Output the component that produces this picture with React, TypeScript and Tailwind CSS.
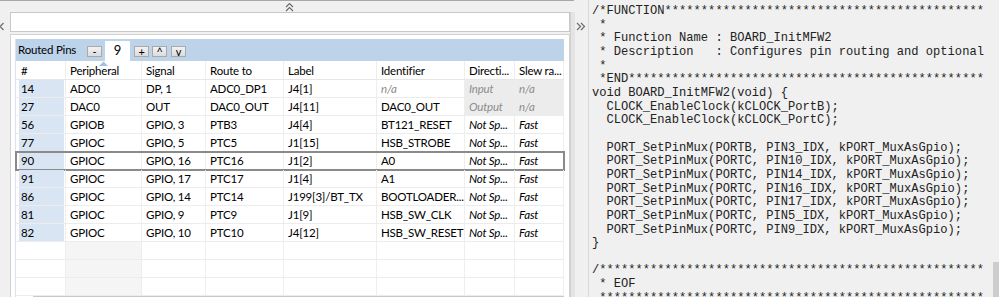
import React from 'react'

type Cell = { text: string; muted?: boolean; italic?: boolean; shaded?: boolean }

const COLUMNS = [
  { label: '#', width: 'w-[50px]' },
  { label: 'Peripheral', width: 'w-[76px]' },
  { label: 'Signal', width: 'w-[64px]' },
  { label: 'Route to', width: 'w-[78px]' },
  { label: 'Label', width: 'w-[93px]' },
  { label: 'Identifier', width: 'w-[88px]' },
  { label: 'Directi...', width: 'w-[50px]' },
  { label: 'Slew ra...', width: 'w-[49px]' },
]

const ROWS: { pin: string; cells: Cell[]; selected?: boolean }[] = [
  {
    pin: '14',
    cells: [
      { text: 'ADC0' },
      { text: 'DP, 1' },
      { text: 'ADC0_DP1' },
      { text: 'J4[1]' },
      { text: 'n/a', muted: true, italic: true },
      { text: 'Input', muted: true, italic: true, shaded: true },
      { text: 'n/a', muted: true, italic: true, shaded: true },
    ],
  },
  {
    pin: '27',
    cells: [
      { text: 'DAC0' },
      { text: 'OUT' },
      { text: 'DAC0_OUT' },
      { text: 'J4[11]' },
      { text: 'DAC0_OUT' },
      { text: 'Output', muted: true, italic: true, shaded: true },
      { text: 'n/a', muted: true, italic: true, shaded: true },
    ],
  },
  { pin: '56', cells: gpio('GPIOB', 'GPIO, 3', 'PTB3', 'J4[4]', 'BT121_RESET') },
  { pin: '77', cells: gpio('GPIOC', 'GPIO, 5', 'PTC5', 'J1[15]', 'HSB_STROBE') },
  { pin: '90', cells: gpio('GPIOC', 'GPIO, 16', 'PTC16', 'J1[2]', 'A0'), selected: true },
  { pin: '91', cells: gpio('GPIOC', 'GPIO, 17', 'PTC17', 'J1[4]', 'A1') },
  { pin: '86', cells: gpio('GPIOC', 'GPIO, 14', 'PTC14', 'J199[3]/BT_TX', 'BOOTLOADER...') },
  { pin: '81', cells: gpio('GPIOC', 'GPIO, 9', 'PTC9', 'J1[9]', 'HSB_SW_CLK') },
  { pin: '82', cells: gpio('GPIOC', 'GPIO, 10', 'PTC10', 'J4[12]', 'HSB_SW_RESET') },
]

function gpio(p: string, s: string, r: string, l: string, id: string): Cell[] {
  return [
    { text: p },
    { text: s },
    { text: r },
    { text: l },
    { text: id },
    { text: 'Not Sp...', italic: true },
    { text: 'Fast', italic: true },
  ]
}

const CODE = `/*FUNCTION**********************************************************************
 *
 * Function Name : BOARD_InitMFW2
 * Description   : Configures pin routing and optionally pin electrical features.
 *
 *END**************************************************************************/
void BOARD_InitMFW2(void) {
  CLOCK_EnableClock(kCLOCK_PortB);
  CLOCK_EnableClock(kCLOCK_PortC);

  PORT_SetPinMux(PORTB, PIN3_IDX, kPORT_MuxAsGpio);
  PORT_SetPinMux(PORTC, PIN10_IDX, kPORT_MuxAsGpio);
  PORT_SetPinMux(PORTC, PIN14_IDX, kPORT_MuxAsGpio);
  PORT_SetPinMux(PORTC, PIN16_IDX, kPORT_MuxAsGpio);
  PORT_SetPinMux(PORTC, PIN17_IDX, kPORT_MuxAsGpio);
  PORT_SetPinMux(PORTC, PIN5_IDX, kPORT_MuxAsGpio);
  PORT_SetPinMux(PORTC, PIN9_IDX, kPORT_MuxAsGpio);
}

/*******************************************************************************
 * EOF
 ******************************************************************************/`

function SmallButton({ children, className = '' }: { children: React.ReactNode; className?: string }) {
  return (
    <div
      className={`w-[15px] h-[11px] mt-[7px] flex items-center justify-center border border-[#a9a9a9] bg-gradient-to-b from-[#f2f2f2] to-[#dcdcdc] text-[11px] leading-none text-black ${className}`}
    >
      {children}
    </div>
  )
}

function DoubleChevron({ dir }: { dir: 'up' | 'right' | 'left' }) {
  const d =
    dir === 'up'
      ? 'M1 5 L4.5 1.5 L8 5 M1 9 L4.5 5.5 L8 9'
      : dir === 'right'
        ? 'M1 1 L4.5 4.5 L1 8 M5 1 L8.5 4.5 L5 8'
        : 'M4.5 1 L1 4.5 L4.5 8 M8.5 1 L5 4.5 L8.5 8'
  return (
    <svg width="10" height="10" viewBox="0 0 10 10" className="block">
      <path d={d} fill="none" stroke="#6b6b6b" strokeWidth="1.2" />
    </svg>
  )
}

export default function App() {
  const emptyRows = 3
  return (
    <div
      className="w-[999px] h-[297px] flex overflow-hidden bg-[#f0f0f0] text-black"
      style={{ fontFamily: 'Lato, "Segoe UI", sans-serif' }}
    >
      {/* Left panel: routed pins table */}
      <div className="w-[588px] shrink-0 flex flex-col">
        <div className="h-[12px] flex flex-col">
          <div className="h-[1px] w-[574px] bg-[#a8a8a8]" />
          <div className="w-[574px] flex justify-center pt-[1px] pl-[6px]">
            <DoubleChevron dir="up" />
          </div>
        </div>
        <div className="flex-1 flex">
          <div className="w-[10px] overflow-hidden pt-[10px]">
            <div className="-ml-[5px]">
              <DoubleChevron dir="left" />
            </div>
          </div>
          <div className="w-[560px] flex flex-col gap-[2px]">
            <div className="h-[20px] bg-white border border-[#c8c8c8]" />
            <div className="flex-1 bg-white border-l border-t border-r border-[#d2d2d2] pl-[4px] pt-[4px] pr-[5px] flex flex-col">
              <div className="flex-1 border-l border-[#d8e4f0] flex flex-col tracking-[-0.2px]">
                <div className="h-[22px] bg-[#bcd3ea] flex items-start pl-[2px] text-[12px]">
                  <span className="w-[69px] h-full flex items-center text-[11.5px]">Routed Pins</span>
                  <SmallButton>-</SmallButton>
                  <div className="w-[25px] h-[20px] mt-[2px] ml-[3px] bg-white flex items-center justify-center text-[13px]">9</div>
                  <SmallButton className="ml-[4px]">+</SmallButton>
                  <SmallButton className="ml-[3px]">^</SmallButton>
                  <SmallButton className="ml-[4px]">v</SmallButton>
                </div>
                <div className="h-[19px] flex text-[11.5px] border-b border-[#e6e6e6] relative">
                  {COLUMNS.map((c, i) => (
                    <div
                      key={c.label}
                      className={`${c.width} ${i === 0 ? 'pl-[5px]' : 'pl-[4px]'} flex items-center pt-[1px] border-r border-[#eeeeee] whitespace-nowrap overflow-hidden`}
                    >
                      {c.label}
                    </div>
                  ))}
                  <svg width="9" height="5" viewBox="0 0 9 5" className="absolute left-[83px] top-[0px]">
                    <path d="M0 5 L4.5 0.5 L9 5 Z" fill="#9cc2e6" />
                  </svg>
                </div>
                {ROWS.map((r) => (
                  <div
                    key={r.pin}
                    className={`h-[18px] flex text-[11.5px] border-b border-[#ececec] ${r.selected ? 'outline-2 outline-[#8a8a8a] -outline-offset-1' : ''}`}
                  >
                    <div className="w-[50px] pl-[3px] pr-[1px] border-r border-[#eeeeee]">
                      <div className="h-full bg-[#d9e5f3] pl-[2px] pt-[1px] flex items-center">{r.pin}</div>
                    </div>
                    {r.cells.map((c, i) => (
                      <div
                        key={i}
                        className={`${COLUMNS[i + 1].width} pl-[4px] pt-[1px] flex items-center border-r border-[#eeeeee] whitespace-nowrap overflow-hidden ${c.italic ? 'italic' : ''} ${c.muted ? 'text-[#8c8c8c]' : ''} ${c.shaded ? 'bg-[#ececec]' : ''}`}
                      >
                        {c.text}
                      </div>
                    ))}
                  </div>
                ))}
                {Array.from({ length: emptyRows }).map((_, k) => (
                  <div key={k} className="h-[18px] flex border-b border-[#ececec]">
                    {COLUMNS.map((c, i) => (
                      <div
                        key={c.label}
                        className={`${c.width} border-r border-[#eeeeee] ${i === 1 ? 'bg-[#f5f5f5]' : ''}`}
                      />
                    ))}
                  </div>
                ))}
                <div className="flex-1 border-t border-[#c8c8c8] ml-[17px]" />
              </div>
            </div>
          </div>
          <div className="w-[18px] flex">
            <div className="w-[5px] bg-[#e4e4e4] border-l border-[#d0d0d0]" />
            <div className="flex-1 pt-[10px] pl-[1px]">
              <DoubleChevron dir="right" />
            </div>
          </div>
        </div>
      </div>

      {/* Right panel: generated code */}
      <div className="flex-1 min-w-0 flex border-l border-[#d9d9d9] bg-[#f0f0f0]">
        <div className="flex-1 min-w-0 overflow-hidden pl-[3px] pt-[5px]">
          <pre
            className="text-[12.1px] leading-[13.65px] text-[#222222] whitespace-pre"
            style={{ fontFamily: '"Liberation Mono", "Courier New", monospace' }}
          >
            {CODE}
          </pre>
        </div>
        <div className="w-[14px] shrink-0 flex flex-col items-end">
          <div className="flex-1" />
          <div className="h-[35px] w-[6px] bg-[#cdcdcd]" />
        </div>
      </div>
    </div>
  )
}
